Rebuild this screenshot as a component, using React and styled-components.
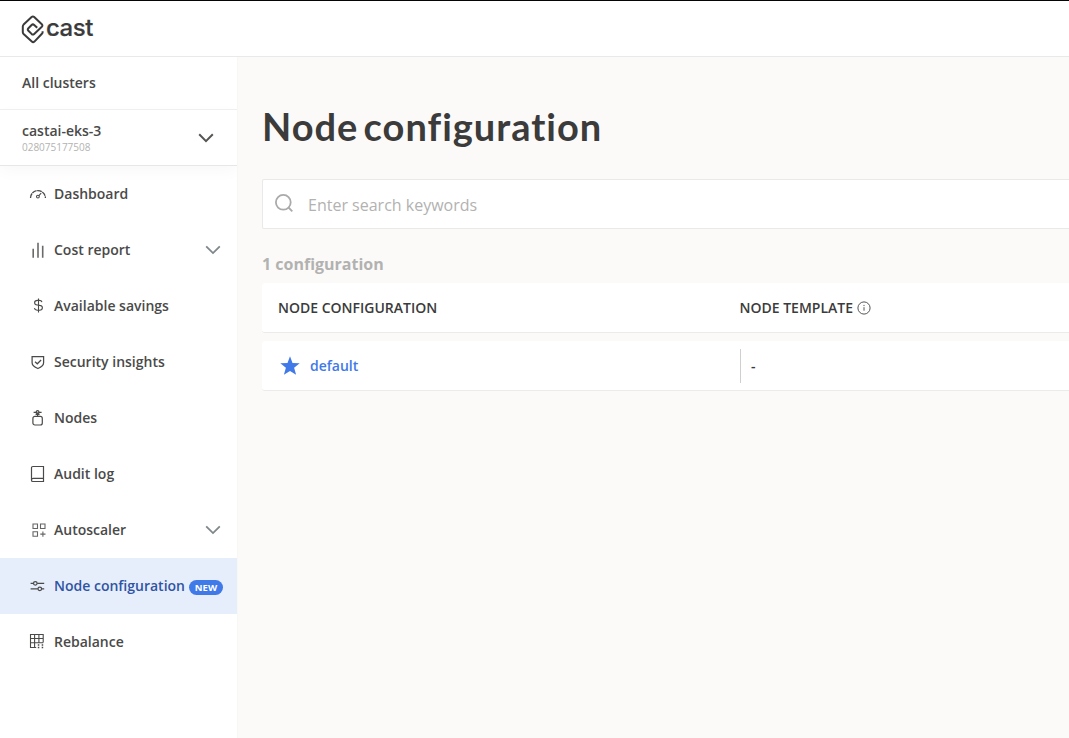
import React from "react";
import styled, { createGlobalStyle } from "styled-components";

const Global = createGlobalStyle`
  *, *::before, *::after { box-sizing: border-box; }
  html, body { margin: 0; height: 100%; overflow: hidden; }
  body { font-family: "Open Sans", "Noto Sans", sans-serif; color: #4a4a49; background: #fbfaf8; }
`;
const Page = styled.div`display: flex; flex-direction: column; height: 100vh;`;
const Header = styled.header`
  height: 57px; flex: none; display: flex; align-items: center; gap: 2px;
  padding: 1px 0 0 21px; background: #fff;
  border-top: 1px solid #050505; border-bottom: 1px solid #e9e9e9;
`;
const Wordmark = styled.span`
  font: 500 24px/30px Inter, sans-serif; letter-spacing: -0.5px; color: #3b3b3b;
  -webkit-text-stroke: 0.2px #3b3b3b; margin-top: -3px;
`;
const Body = styled.div`display: flex; flex: 1; min-height: 0;`;
const Sidebar = styled.aside`
  width: 238px; flex: none; background: #fff; border-right: 1px solid #f7f7f6;
  font-size: 14px; font-weight: 600; line-height: 20px; overflow: hidden;
`;
const AllClusters = styled.div`
  height: 53px; padding: 16px 22px; border-bottom: 1px solid #f0f0f0;
`;
const Cluster = styled.div`
  height: 56px; padding: 11px 23px 0 22px; display: flex; justify-content: space-between;
  border-bottom: 1px solid #e7e7e7; box-shadow: 0 5px 15px rgba(0, 0, 0, 0.03);
  & > svg { margin-top: 9px; }
`;
const ClusterId = styled.div`font-size: 10px; font-weight: 400; line-height: 12px; color: #b3b3b2; letter-spacing: -0.02px;`;
const NavItem = styled.a`
  height: 56px; display: flex; align-items: center; padding: 0 16px 0 29px; white-space: nowrap;
  background: ${(p) => (p.$active ? "#e6eefc" : "transparent")};
  color: ${(p) => (p.$active ? "#2f54a3" : "inherit")};
`;
const NavIcon = styled.svg.attrs({ width: 20, height: 20, viewBox: "0 0 20 20" })`
  flex: none; margin-right: 5px; fill: none; stroke: #4a4a49; stroke-width: 1.1;
`;
const NavChevron = styled.span`display: flex; margin-left: auto;`;
const Badge = styled.span`
  flex: none; margin: 3px 0 0 4px; width: 34px; height: 15px; border-radius: 8px; text-align: center;
  background: #4079e8; color: #fff; font-size: 9.5px; font-weight: 700; line-height: 15px;
`;
const Main = styled.main`flex: 1; min-width: 0; padding: 46px 0 0 24px;`;
const Title = styled.h1`
  margin: 0; height: 46px; white-space: nowrap;
  font: 700 38px/46px Lato, sans-serif; letter-spacing: 1px; word-spacing: -5px; color: #3b3b3b;
`;
const Search = styled.div`
  height: 50px; margin-top: 30px; display: flex; align-items: center;
  padding: 0 0 0 11px; gap: 13px; background: #fff; color: #b2b2b1; font-size: 16px;
  border: 1px solid #e9e9e8; border-right: 0; border-radius: 2px 0 0 2px;
  & > svg { margin-top: -2px; }
  & > span { margin-top: 1px; }
`;
const Count = styled.div`
  margin: 24px 0 8px; font-size: 16px; font-weight: 700; line-height: 22px; color: #b2b2b1;
`;
const Row = styled.div`
  height: 50px; margin-bottom: 8px; display: grid; grid-template-columns: 462px 1fr;
  align-items: center; padding-left: 16px; background: #fff;
  border-bottom: 1px solid #ebebeb; border-radius: 3px 0 0 3px;
  font-size: 14px; font-weight: 600; line-height: 20px; color: #3b3b3b;
`;
const HeadCell = styled.div`display: flex; align-items: center; gap: 4px; margin-left: ${(p) => p.$shift || 0}px;`;
const NameCell = styled.a`display: flex; align-items: center; gap: 10px; color: #4079e8; padding-left: 2px;`;
const TemplateCell = styled.div`
  height: 34px; border-left: 1px solid #cfcfcf; padding-left: 10px; line-height: 34px;
`;

const Chevron = ({ color, w = 1.8 }) => (
  <svg width="16" height="16" viewBox="0 0 16 16" fill="none" stroke={color} strokeWidth={w}>
    <path d="M1.2 4.3 8 11.1l6.8-6.8" />
  </svg>
);

const icons = {
  dashboard: (
    <g>
      <path d="M1.5 14a7.4 7.4 0 0 1 14.9 0" strokeWidth="1.3" strokeDasharray="4.8 .6" />
      <circle cx="8.9" cy="12.6" r="1.4" /><path d="m9.9 11.6 2.3-2.4" />
    </g>
  ),
  cost: <path d="M4.2 8.8v9M9 2.8v15M13.7 5.8v12" strokeWidth="1.6" stroke="#6a6a69" />,
  savings: <path d="M9.5 2.4v14M13 6.2c-.3-1.2-1.4-1.8-2.8-1.8H8.6c-1.8 0-3 .9-3 2.3s1.1 2.1 2.7 2.3l2.4.4c1.6.2 2.7 1 2.7 2.4s-1.2 2.4-3 2.4H8.6c-1.7 0-2.9-.7-3.2-2" />,
  security: <g strokeWidth="1.25"><path d="M3.1 4.7h11.5v6.1c0 3-2.7 4.6-5.7 5.7-3-1.1-5.8-2.7-5.8-5.7z" /><path d="m6 9.7 2.3 2.1 3.8-3.8" /></g>,
  nodes: <g strokeWidth="1.2"><rect x="3.9" y="8.4" width="9.4" height="8.6" rx="2" /><path d="M8.6 8.4V5.2M4.6 4.3h2.6M10 4.3h2.6M6.6 6.6l2-1.4 2 1.4" /><circle cx="8.6" cy="3.9" r="1.3" /></g>,
  audit: <g strokeWidth="1.2"><path d="M14.5 17.5H3.8a1.3 1.3 0 0 1-1.3-1.3V3.8a1.3 1.3 0 0 1 1.3-1.3h10.7zM2.5 15.9c0-1.2.8-1.6 1.7-1.6h10.3" /></g>,
  autoscaler: <g stroke="#656564"><path d="M4 4h4.5v4.5H4zM11.5 4H16v4.5h-4.5zM4 11.8h4.5v4.5H4zM13.9 11.5v5.2M11.3 14.1h5.2" /></g>,
  config: <g strokeWidth="1.25"><path d="M1.6 7.3h2.8M8.2 7.3h7M1.6 12.8h7.3M12.7 12.8h2.5" /><circle cx="6.3" cy="7.3" r="1.8" /><circle cx="10.8" cy="12.8" r="1.8" /></g>,
  rebalance: <g><path d="M7.2 15.5H1.5v-13h12.7v8M1.5 6.5h12.7M1.5 10.7h12.7M5.6 2.5v13M9.9 2.5v8.2" /><path d="M8.8 13h1.5M12.7 13h1.5M8.8 15.5h1.5M12.7 15.5h1.5" strokeWidth="1.4" /></g>,
};

const items = [
  { label: "Dashboard", icon: "dashboard" },
  { label: "Cost report", icon: "cost", expandable: true },
  { label: "Available savings", icon: "savings" },
  { label: "Security insights", icon: "security" },
  { label: "Nodes", icon: "nodes" },
  { label: "Audit log", icon: "audit" },
  { label: "Autoscaler", icon: "autoscaler", expandable: true },
  { label: "Node configuration", icon: "config", active: true, badge: "NEW" },
  { label: "Rebalance", icon: "rebalance" },
];

export default function App() {
  return (
    <Page>
      <Global />
      <Header>
        <svg width="23" height="29" viewBox="0 0 23 29" fill="none" stroke="#3b3b3b" strokeWidth="2" strokeLinejoin="round">
          <path d="M21.6 16.2v1q0 .8-.7 1.5L13.4 26.600q-1.300 1.200-2.600 0L2.600 19q-.8-.8-.8-1.800v-5.800q0-1 .8-1.800L10.600 2.100q1.300-1.200 2.600 0l7.600 7.200q1.200 1.200 0 2.400l-7.600 7.200q-1.300 1.200-2.600 0l-3.200-3.200q-1.200-1.200 0-2.400l3.200-3.300q1.300-1.200 2.600 0l3 2.800" />
        </svg>
        <Wordmark>cast</Wordmark>
      </Header>
      <Body>
        <Sidebar>
          <AllClusters>All clusters</AllClusters>
          <Cluster>
            <div>castai-eks-3<ClusterId>028075177508</ClusterId></div>
            <Chevron color="#555554" w={2} />
          </Cluster>
          <nav>
            {items.map((it) => (
              <NavItem key={it.label} $active={it.active}>
                <NavIcon>{icons[it.icon]}</NavIcon>
                {it.label}
                {it.badge && <Badge>{it.badge}</Badge>}
                {it.expandable && <NavChevron><Chevron color="#7e878b" /></NavChevron>}
              </NavItem>
            ))}
          </nav>
        </Sidebar>
        <Main>
          <Title>Node configuration</Title>
          <Search>
            <svg width="21" height="21" viewBox="0 0 21 21" fill="none" stroke="#aaa" strokeWidth="1.8">
              <circle cx="9.3" cy="9.3" r="7.4" /><path d="m14.5 14.5 3.8 3.8" />
            </svg>
            <span>Enter search keywords</span>
          </Search>
          <Count>1 configuration</Count>
          <Row>
            <HeadCell>NODE CONFIGURATION</HeadCell>
            <HeadCell $shift={-0.5}>
              NODE TEMPLATE
              <svg width="14" height="14" viewBox="0 0 14 14" fill="none" stroke="#555">
                <circle cx="7" cy="7" r="6.1" /><path d="M7 6.2v3.5M7 3.9v1.2" />
              </svg>
            </HeadCell>
          </Row>
          <Row>
            <NameCell>
              <svg width="20" height="20" viewBox="0 0 20 20" fill="#4079e8">
                <path d="m10 .3 2.5 6.7 7.200.3-5.600 4.500 2 7L10 14.900l-6.100 3.900 2-7L.3 7.300 7.500 7z" />
              </svg>
              default
            </NameCell>
            <TemplateCell>-</TemplateCell>
          </Row>
        </Main>
      </Body>
    </Page>
  );
}
